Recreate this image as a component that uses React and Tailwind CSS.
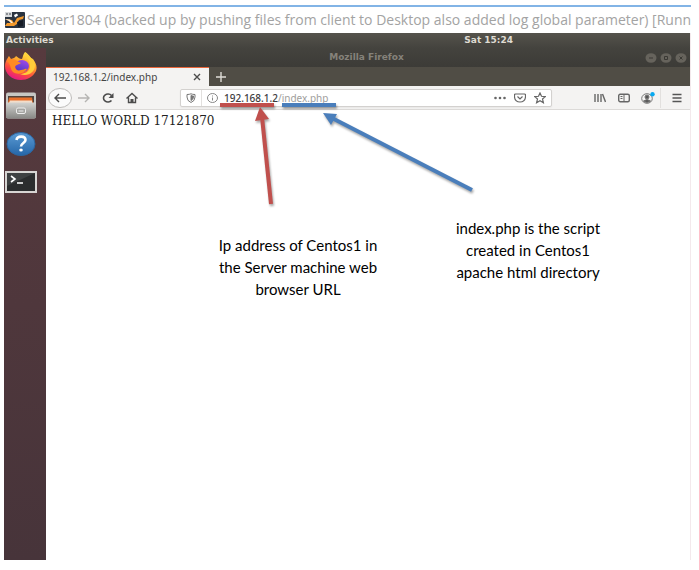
import React from "react";

const ui = "font-['DejaVu_Sans',sans-serif]";
const page = "font-['Noto_Sans',sans-serif]";

function VmIcon() {
  return (
    <svg className="h-4 w-5 shrink-0" viewBox="0 0 20 16" aria-hidden="true">
      <rect x="0" y="0" width="20" height="16" rx="1" fill="#2b3440" />
      <path d="M0 0H7V5H0Z" fill="#d9dbdd" />
      <path d="M1 1H3V3H1ZM4 1H6V3H4Z" fill="#8b8f94" />
      <path d="M0 7L7 8L9 11L12 6L19 4L18 7L14 8L12 12L9 14L0 14L2 11L6 11L4 9Z" fill="#f49a2c" />
      <path d="M0 7L5 7.500L8 11L6 11L4 9Z" fill="#fff1dc" />
      <path d="M9 3L12 1.500L13 3.500L10 5.500Z" fill="#fff" />
      <path d="M12 10L18 8V14L13 15Z" fill="#171d26" />
    </svg>
  );
}

function FirefoxIcon() {
  return (
    <svg className="h-7 w-8" viewBox="0 0 32 28" aria-hidden="true">
      <defs>
        <linearGradient id="fox" x1="0.8" y1="0" x2="0.3" y2="1">
          <stop offset="0" stopColor="#fff34a" />
          <stop offset="0.4" stopColor="#ffa12b" />
          <stop offset="0.7" stopColor="#fd4a40" />
          <stop offset="1" stopColor="#e4158a" />
        </linearGradient>
        <linearGradient id="globe" x1="0.7" y1="0" x2="0.3" y2="1">
          <stop offset="0" stopColor="#a04ae8" />
          <stop offset="1" stopColor="#4a38c8" />
        </linearGradient>
      </defs>
      <path d="M20 0C25 3 25 6 28 7C31 11 32.500 15 31 19C28 25 22 28 16 28C7 28 0 22 0 14C0 11 1 9 2 7C3 6 3 5 4 4L6 7C8 6 10 6 11 4C13 5 14 7 17 7C18 5 18 2 20 0Z" fill="url(#fox)" />
      <ellipse cx="17" cy="14" rx="7" ry="6" fill="url(#globe)" />
      <path d="M2 9C5 6 9 7 12 9L16 11C14 13 11 12 10 15C10 18 13 19 16 18C19 18 20 16 22 17C19 22 12 23 8 20C5 17 6 12 2 9Z" fill="#ff8a24" />
      <path d="M20 0C20 6 26 8 25 15C24 20 19 22 15 22C22 25 30 21 30 13C30 8 24 5 20 0Z" fill="#ffce3a" />
    </svg>
  );
}

function FilesIcon() {
  return (
    <svg className="h-7 w-8" viewBox="0 0 32 28" aria-hidden="true">
      <defs>
        <linearGradient id="cabinet" x1="0" y1="0" x2="0" y2="1">
          <stop offset="0" stopColor="#d2d2cf" />
          <stop offset="1" stopColor="#888885" />
        </linearGradient>
      </defs>
      <rect x="1" y="0.500" width="30" height="26" rx="2" fill="#c6c6c3" />
      <path d="M3 4H29V11H3Z" fill="#51443d" />
      <path d="M4 5.500H27L28 11H3Z" fill="#e86f2b" />
      <path d="M5 8.500H27V11H4Z" fill="#f3ddc9" />
      <path d="M1 10.500H31V24.500Q31 26.500 29 26.500H3Q1 26.500 1 24.500Z" fill="url(#cabinet)" />
      <rect x="11.500" y="16" width="9" height="5.500" rx="1.500" fill="#a4a4a1" stroke="#eee" />
      <path d="M13.500 19H18.500" stroke="#eee" />
    </svg>
  );
}

function HelpIcon() {
  return (
    <svg className="h-6 w-8" viewBox="0 0 32 24" aria-hidden="true">
      <defs>
        <linearGradient id="help" x1="0" y1="0" x2="0" y2="1">
          <stop offset="0" stopColor="#5b9bd4" />
          <stop offset="1" stopColor="#2566a8" />
        </linearGradient>
      </defs>
      <ellipse cx="16" cy="12" rx="14" ry="11.500" fill="url(#help)" stroke="#2c659f" />
      <path d="M11.500 8C12 3.500 20.500 3.500 20.500 8C20.500 11 16 11 16 14.500" fill="none" stroke="#fff" strokeWidth="2.600" />
      <ellipse cx="16" cy="18" rx="1.800" ry="1.600" fill="#fff" />
    </svg>
  );
}

function TerminalIcon() {
  return (
    <svg className="h-[22px] w-8" viewBox="0 0 32 22" aria-hidden="true">
      <rect x="0" y="0" width="32" height="22" fill="#d7d5d3" />
      <rect x="2" y="2" width="28" height="18" fill="#2b2d2e" />
      <path d="M2 2H30L2 15Z" fill="#3e4142" />
      <path d="M6 5L10 8L6 11M12 12H18" fill="none" stroke="#fff" strokeWidth="1.600" />
    </svg>
  );
}

const stroke = { fill: "none", stroke: "#4c4c4c", strokeWidth: 1.4, "aria-hidden": true };

function ToolButton({ label, className = "", children }) {
  return (
    <button type="button" aria-label={label} className={"flex h-4 shrink-0 items-center justify-center " + className}>
      {children}
    </button>
  );
}

function WindowDots() {
  const marks = ["M4 5H8", "M4.500 3.500H7.500V6.500H4.500Z", "M4.500 3.500L7.500 6.500M7.500 3.500L4.500 6.500"];
  const names = ["Minimize", "Maximize", "Close window"];
  return (
    <div className="flex flex-1 justify-end gap-[3px] pr-[3px]">
      {marks.map((d, i) => (
        <button key={d} type="button" aria-label={names[i]}>
          <svg className="block h-[10px] w-3" viewBox="0 0 12 10" aria-hidden="true">
            <ellipse cx="6" cy="5" rx="5.500" ry="4.800" fill="#66635c" />
            <path d={d} fill="none" stroke="#3a3934" />
          </svg>
        </button>
      ))}
    </div>
  );
}

function Toolbar() {
  return (
    <div className="flex h-6 items-center border-b border-[#dcdad8] bg-[#f4f3f2] pr-[5px] pl-[2px]">
      <ToolButton label="Back" className="w-6">
        <svg className="h-5 w-6 shrink-0" viewBox="0 0 24 20" {...stroke}>
          <ellipse cx="12" cy="10" rx="11.500" ry="9.500" fill="#fbfbfb" stroke="#bdbbb9" strokeWidth="1" />
          <path d="M18 10H7M11 6L7 10L11 14" />
        </svg>
      </ToolButton>
      <ToolButton label="Forward" className="w-6">
        <svg className="h-3 w-3" viewBox="0 0 12 12" {...stroke} stroke="#b5b4b2">
          <path d="M0 6H11M7 2L11 6L7 10" />
        </svg>
      </ToolButton>
      <ToolButton label="Reload" className="w-6">
        <svg className="h-3 w-3" viewBox="0 0 12 12" {...stroke} strokeWidth="1.600">
          <path d="M9.500 8.500A4.500 4 0 1 1 9.500 3.500" />
          <path d="M11.500 1V6H6.500Z" fill="#4c4c4c" stroke="none" />
        </svg>
      </ToolButton>
      <ToolButton label="Home" className="w-6">
        <svg className="h-3 w-3" viewBox="0 0 12 12" {...stroke}>
          <path d="M0.500 6.500L6 1.500L11.500 6.500M2.500 5.500V10.500H9.500V5.500" />
          <path d="M4.500 7H7.500V10H4.500Z" fill="#4c4c4c" stroke="none" />
        </svg>
      </ToolButton>
      <div className="ml-9 flex h-[18px] min-w-0 flex-1 items-center rounded-xs border border-[#d3d1cf] bg-white pr-px pl-[2px] shadow-xs">
        <ToolButton label="Tracking protection" className="w-4">
          <svg className="h-[10px] w-[10px]" viewBox="0 0 10 10" {...stroke} strokeWidth="1" stroke="#777">
            <path d="M1 1.500Q3.500 1.500 5 0.800Q6.500 1.500 9 1.500V4Q9 8 5 9.500Q1 8 1 4Z" />
            <path d="M5 2.500Q6 3 7.500 3V4.500Q7 6.500 5 7.500Z" fill="#777" />
          </svg>
        </ToolButton>
        <span className="mx-[2px] h-4 w-px shrink-0 bg-[#e2e0de]" />
        <ToolButton label="Site information" className="w-4">
          <svg className="h-[10px] w-[11px]" viewBox="0 0 11 10" {...stroke} strokeWidth="1" stroke="#888">
            <ellipse cx="5.500" cy="5" rx="5" ry="4.500" />
            <path d="M5.500 4.500V7.500M5.500 2.500V3.500" />
          </svg>
        </ToolButton>
        <div className={"relative ml-1 min-w-0 flex-1 text-[10px] leading-4 whitespace-nowrap " + page}>
          <input aria-label="Address" defaultValue="192.168.1.2/index.php" className="absolute inset-0 w-full text-transparent outline-none" />
          <span className="pointer-events-none relative text-[#a09e9c]">
            <span className="font-medium text-[#3d3d3d]">192.168.1.2</span>/index.php
          </span>
        </div>
        <ToolButton label="Page actions" className="w-5">
          <svg className="h-3 w-3" viewBox="0 0 12 12" fill="#666" aria-hidden="true">
            <circle cx="1.500" cy="6" r="1.300" /><circle cx="6" cy="6" r="1.300" /><circle cx="10.500" cy="6" r="1.300" />
          </svg>
        </ToolButton>
        <ToolButton label="Save to Pocket" className="w-5">
          <svg className="h-3 w-3" viewBox="0 0 12 12" {...stroke} strokeWidth="1.200" stroke="#666">
            <path d="M1.500 2H10.500Q11.500 2 11.500 3V5Q11 10 6 10Q1 10 0.500 5V3Q0.500 2 1.500 2Z" />
            <path d="M3.500 4.500L6 7L8.500 4.500" />
          </svg>
        </ToolButton>
        <ToolButton label="Bookmark" className="w-5">
          <svg className="h-3 w-3" viewBox="0 0 12 12" {...stroke} strokeWidth="1.200" stroke="#666">
            <path d="M6 1L7.500 4.300L11.300 4.600L8.500 7L9.400 10.700L6 8.800L2.600 10.700L3.500 7L0.700 4.600L4.500 4.300Z" />
          </svg>
        </ToolButton>
      </div>
      <div className="ml-9 flex shrink-0 items-center">
        <ToolButton label="Library" className="w-6">
          <svg className="h-[10px] w-3" viewBox="0 0 12 10" {...stroke} stroke="#666">
            <path d="M1 1V9M4 1V9M7 1V9M8.500 1L11.500 9" />
          </svg>
        </ToolButton>
        <ToolButton label="Sidebars" className="w-6">
          <svg className="h-[10px] w-3" viewBox="0 0 12 10" {...stroke} stroke="#666">
            <rect x="0.700" y="1.200" width="10.600" height="7.600" rx="1.500" />
            <path d="M6 1.500V8.500M2.500 3.500H4.500M2.500 5.500H4.500" strokeWidth="1" />
          </svg>
        </ToolButton>
        <ToolButton label="Account" className="w-6">
          <svg className="h-3 w-[14px]" viewBox="0 0 14 12" {...stroke} strokeWidth="1" stroke="#777">
            <ellipse cx="6" cy="6.500" rx="5.300" ry="4.800" />
            <circle cx="6" cy="5" r="2" fill="#555" />
            <path d="M2.500 9Q6 6 9.500 9Q6 12 2.500 9Z" fill="#555" />
            <circle cx="11.500" cy="2.200" r="2.200" fill="#08a9f0" stroke="none" />
          </svg>
        </ToolButton>
      </div>
      <span className="mr-2 h-5 w-px shrink-0 bg-[#e2e0de]" />
      <ToolButton label="Menu" className="w-4">
        <svg className="h-[10px] w-[10px]" viewBox="0 0 10 10" {...stroke} stroke="#555">
          <path d="M0.500 1.500H9.500M0.500 5H9.500M0.500 8.500H9.500" />
        </svg>
      </ToolButton>
    </div>
  );
}

function Arrows() {
  return (
    <svg className="pointer-events-none absolute top-0 left-0 h-[200px] w-[500px] drop-shadow-[1px_2px_1px_rgba(0,0,0,0.35)]" viewBox="0 0 500 200" aria-hidden="true">
      <path d="M216 72H270" stroke="#c0504d" strokeWidth="4" />
      <path d="M278 72H332" stroke="#4a7ebb" strokeWidth="4" />
      <path d="M267 171L258 84" stroke="#c0504d" strokeWidth="4" />
      <path d="M256 74L265 86L251 88Z" fill="#c0504d" />
      <path d="M468 157L328 85" stroke="#4a7ebb" strokeWidth="4" />
      <path d="M319 80L333 81L327 92Z" fill="#4a7ebb" />
    </svg>
  );
}

export default function App() {
  return (
    <div className="overflow-hidden bg-white pt-[5px] pr-2 pb-[10px] pl-1">
      <div className="h-[2px] bg-[#82b4e6]" />
      <header className="flex h-[26px] items-center gap-[2px] overflow-hidden pl-px">
        <VmIcon />
        <h1 className="font-['Open_Sans',sans-serif] text-[14px] leading-5 whitespace-nowrap text-[#a3a3a3]">
          Server1804 (backed up by pushing files from client to Desktop also added log global parameter) [Running]
        </h1>
      </header>
      <div className="relative flex min-h-[527px] flex-col border-r border-[#f3e9ec]">
        <div className={"flex h-[15px] items-center bg-linear-to-b from-[#55534c] to-[#44433e] text-[9px] font-bold text-[#dfdbd2] " + ui}>
          <button type="button" className="flex-1 pl-[2px] text-left leading-[15px]">Activities</button>
          <time className="leading-[15px]">Sat 15:24</time>
          <span className="w-[177px]" />
        </div>
        <div className="flex flex-1">
          <nav aria-label="Dock" className="flex w-[42px] shrink-0 flex-col items-start gap-3 bg-linear-to-b from-[#573a3e] to-[#47343a] pt-1 pl-px">
            <button type="button" aria-label="Firefox"><FirefoxIcon /></button>
            <button type="button" aria-label="Files"><FilesIcon /></button>
            <button type="button" aria-label="Help"><HelpIcon /></button>
            <button type="button" aria-label="Terminal" className="mt-[3px]"><TerminalIcon /></button>
          </nav>
          <section className="flex min-w-0 flex-1 flex-col">
            <div className={"flex h-[19px] items-center bg-linear-to-b from-[#44433e] to-[#3c3b37] text-[9px] font-bold text-[#85827a] " + ui}>
              <span className="flex-1" />
              <span>Mozilla Firefox</span>
              <WindowDots />
            </div>
            <div className="flex h-[19px] bg-[#504d45]">
              <div className={"flex w-[163px] items-center justify-between border-t border-[#e9663a] bg-[#f4f3f2] pr-2 pl-[7px] text-[10px] leading-4 text-[#444] " + page}>
                <span>192.168.1.2/index.php</span>
                <button type="button" aria-label="Close tab">
                  <svg className="h-2 w-2" viewBox="0 0 8 8" {...stroke}><path d="M1 1L7 7M7 1L1 7" /></svg>
                </button>
              </div>
              <button type="button" aria-label="New tab" className="flex w-6 items-center justify-center">
                <svg className="h-[10px] w-[10px]" viewBox="0 0 10 10" {...stroke} stroke="#dedcd6"><path d="M5 0V10M0 5H10" /></svg>
              </button>
            </div>
            <Toolbar />
            <main className="flex-1 bg-white px-[6px] pt-px">
              <p className="font-['DejaVu_Serif',serif] text-[12px] leading-5 text-[#222]">HELLO WORLD 17121870</p>
            </main>
          </section>
        </div>
        <Arrows />
        <p className="absolute top-[201px] left-[208px] w-[172px] text-center font-['Lato',sans-serif] text-[15px] leading-[22px] text-black">
          Ip address of Centos1 in the Server machine web browser URL
        </p>
        <p className="absolute top-[184px] left-[444px] w-[160px] text-center font-['Lato',sans-serif] text-[15px] leading-[22px] text-black">
          index.php is the script created in Centos1 apache html directory
        </p>
      </div>
    </div>
  );
}
